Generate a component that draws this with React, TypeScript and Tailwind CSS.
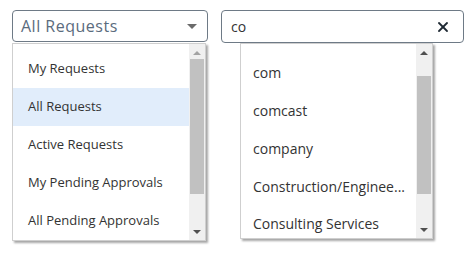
import { X } from "lucide-react";

const LEFT_ITEMS = ["My Requests", "All Requests", "Active Requests", "My Pending Approvals", "All Pending Approvals"];
const RIGHT_ITEMS = ["com", "comcast", "company", "Construction/Enginee...", "Consulting Services"];

function ScrollBar({ thumbTop, thumbHeight, upDark }: { thumbTop: number; thumbHeight: number; upDark: boolean }) {
  return (
    <div className="relative w-[16px] h-full bg-[#f0f0f0] shrink-0">
      <div className="h-[17px] flex items-center justify-center">
        <div
          className={
            "w-0 h-0 border-l-[4px] border-r-[4px] border-b-[4px] border-l-transparent border-r-transparent " +
            (upDark ? "border-b-[#505050]" : "border-b-[#a3a3a3]")
          }
        />
      </div>
      <div className="absolute left-[1px] right-[1px] bg-[#c1c1c1]" style={{ top: thumbTop, height: thumbHeight }} />
      <div className="absolute bottom-0 left-0 right-0 h-[17px] flex items-center justify-center">
        <div className="w-0 h-0 border-l-[4px] border-r-[4px] border-t-[4px] border-l-transparent border-r-transparent border-t-[#505050]" />
      </div>
    </div>
  );
}

export default function App() {
  return (
    <div className="w-[470px] h-[257px] bg-white flex gap-[13px] pl-[12px] pt-[10px]" style={{ fontFamily: '"Open Sans", sans-serif' }}>
      {/* request filter */}
      <div className="w-[196px] flex flex-col">
        <div className="h-[32px] border border-[#6e7a86] rounded-[4px] flex items-center justify-between pl-[8px] pr-[10px]">
          <span className="text-[16px] tracking-[0.5px] text-[#5a6b7d] font-medium">All Requests</span>
          <div className="w-0 h-0 border-l-[5px] border-r-[5px] border-t-[5px] border-l-transparent border-r-transparent border-t-[#6b6b6b]" />
        </div>
        <div className="mt-[1px] w-[194px] h-[198px] bg-white border border-[#cfcfcf] shadow-[2px_2px_2px_rgba(0,0,0,0.35)] flex">
          <div className="flex-1 pt-[6px]">
            {LEFT_ITEMS.map((item) => (
              <div
                key={item}
                className={
                  "h-[38px] flex items-center pl-[15px] text-[13px] text-[#333] " +
                  (item === "All Requests" ? "bg-[#e1edfb]" : "")
                }
              >
                {item}
              </div>
            ))}
          </div>
          <ScrollBar thumbTop={15} thumbHeight={135} upDark={false} />
        </div>
      </div>

      {/* search */}
      <div className="w-[243px] flex flex-col">
        <div className="h-[33px] border border-[#6e7a86] rounded-[4px] flex items-center justify-between pl-[9px] pr-[12px]">
          <span className="text-[14px] text-[#333]">co</span>
          <X className="w-[16px] h-[16px] text-[#1f2933]" strokeWidth={2.75} />
        </div>
        <div className="ml-[19px] w-[193px] h-[196px] bg-white border border-[#cfcfcf] shadow-[2px_2px_2px_rgba(0,0,0,0.35)] flex">
          <div className="flex-1 pt-[10px] overflow-hidden">
            {RIGHT_ITEMS.map((item) => (
              <div key={item} className="h-[37.75px] flex items-center pl-[12px] text-[14px] text-[#333] whitespace-nowrap">
                {item}
              </div>
            ))}
          </div>
          <ScrollBar thumbTop={32} thumbHeight={118} upDark={true} />
        </div>
      </div>
    </div>
  );
}
